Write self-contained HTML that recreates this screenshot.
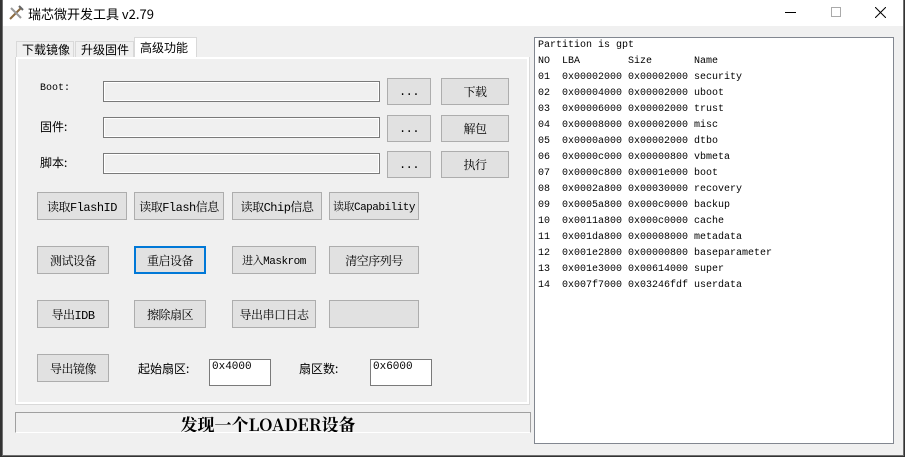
<!DOCTYPE html>
<html><head><meta charset="utf-8"><style>
*{box-sizing:border-box;margin:0;padding:0}
body{width:905px;height:457px;overflow:hidden;background:#333;font-family:"Liberation Sans","Noto Sans CJK SC",sans-serif;font-size:12px;color:#000;position:relative}
.win{position:absolute;left:2px;top:0;width:902px;height:456px;background:#f0f0f0;border:1px solid #707070;border-top:none}
.title{position:absolute;left:0;top:0;width:100%;height:26px;background:#fff}
.a{position:absolute}
.btn{position:absolute;background:#e1e1e1;border:1px solid #adadad;text-align:center;font-family:"Liberation Mono","Noto Serif CJK SC",monospace;font-size:12px;letter-spacing:-0.5px;display:flex;align-items:center;justify-content:center;white-space:nowrap}
.inp{position:absolute;background:#f0f0f0;border:1px solid #7a7a7a;box-shadow:inset 0 0 0 1px #fff}
.lbl{position:absolute;font-size:12px;font-family:"Noto Sans CJK SC",sans-serif}
.list{position:absolute;left:531px;top:37px;width:360px;height:407px;background:#fff;border:1px solid #828790;font-family:"Liberation Mono","Noto Sans CJK SC",monospace;font-size:10px;line-height:16px;padding:0 0 0 3px;white-space:pre}
</style></head><body>
<div class="win">
<div class="title">
 <svg class="a" style="left:5px;top:5px" width="16" height="16"><path d="M2 14L13 3" stroke="#8a6a40" stroke-width="2"/><path d="M3 3l10 10" stroke="#999" stroke-width="2"/><path d="M11 1l4 4" stroke="#666" stroke-width="2"/></svg>
 <div class="a" style="left:25px;top:4px;font-size:13px;font-family:'Noto Sans CJK SC',sans-serif">瑞芯微开发工具 v2.79</div>
 <div class="a" style="left:782px;top:12px;width:11px;height:1px;background:#000"></div>
 <div class="a" style="left:828px;top:7px;width:10px;height:10px;border:1px solid #aaa"></div>
 <svg class="a" style="left:872px;top:7px" width="11" height="11"><path d="M0 0L11 11M11 0L0 11" stroke="#000" stroke-width="1"/></svg>
</div>
<div class="a" style="left:13px;top:41px;width:58px;height:17px;border:1px solid #d9d9d9;border-bottom:none;background:#f0f0f0"></div>
<div class="lbl" style="left:19px;top:41px">下载镜像</div>
<div class="a" style="left:72px;top:41px;width:59px;height:17px;border:1px solid #d9d9d9;border-bottom:none"></div>
<div class="lbl" style="left:78px;top:41px">升级固件</div>
<div class="a" style="left:131px;top:37px;width:63px;height:21px;background:#fff;border:1px solid #d9d9d9;border-bottom:none"></div>
<div class="lbl" style="left:137px;top:39px">高级功能</div>
<div class="a" style="left:12px;top:57px;width:515px;height:348px;border:1px solid #d9d9d9;border-top:none;box-shadow:inset 0 0 0 2px #fff"></div>
<div class="a" style="left:13px;top:57px;width:118px;height:1px;background:#fff"></div>

<div class="lbl" style="left:37px;top:83px;font-family:'Liberation Mono',monospace;font-size:10px">Boot:</div>
<div class="lbl" style="left:37px;top:118px">固件:</div>
<div class="lbl" style="left:37px;top:154px">脚本:</div>
<div class="inp" style="left:100px;top:81px;width:277px;height:21px"></div>
<div class="inp" style="left:100px;top:117px;width:277px;height:21px"></div>
<div class="inp" style="left:100px;top:153px;width:277px;height:21px"></div>
<div class="btn" style="left:384px;top:78px;width:44px;height:27px">...</div>
<div class="btn" style="left:384px;top:115px;width:44px;height:27px">...</div>
<div class="btn" style="left:384px;top:151px;width:44px;height:27px">...</div>
<div class="btn" style="left:438px;top:78px;width:68px;height:27px">下载</div>
<div class="btn" style="left:438px;top:115px;width:68px;height:27px">解包</div>
<div class="btn" style="left:438px;top:151px;width:68px;height:27px">执行</div>

<div class="btn" style="left:34px;top:192px;width:90px;height:28px">读取FlashID</div>
<div class="btn" style="left:131px;top:192px;width:90px;height:28px">读取Flash信息</div>
<div class="btn" style="left:229px;top:192px;width:90px;height:28px">读取Chip信息</div>
<div class="btn" style="left:326px;top:192px;width:90px;height:28px;font-size:11px">读取Capability</div>

<div class="btn" style="left:34px;top:246px;width:72px;height:28px">测试设备</div>
<div class="btn" style="left:131px;top:246px;width:72px;height:28px;border:2px solid #0078d7">重启设备</div>
<div class="btn" style="left:229px;top:246px;width:84px;height:28px;font-size:11px">进入Maskrom</div>
<div class="btn" style="left:326px;top:246px;width:90px;height:28px">清空序列号</div>

<div class="btn" style="left:34px;top:300px;width:72px;height:28px">导出IDB</div>
<div class="btn" style="left:131px;top:300px;width:72px;height:28px">擦除扇区</div>
<div class="btn" style="left:229px;top:300px;width:84px;height:28px">导出串口日志</div>
<div class="btn" style="left:326px;top:300px;width:90px;height:28px"></div>

<div class="btn" style="left:34px;top:354px;width:72px;height:28px">导出镜像</div>
<div class="lbl" style="left:135px;top:360px">起始扇区:</div>
<div class="a" style="left:206px;top:359px;width:62px;height:27px;background:#fff;border:1px solid #7a7a7a;font-family:'Liberation Mono',monospace;font-size:11px;padding:1px 0 0 2px">0x4000</div>
<div class="lbl" style="left:296px;top:360px">扇区数:</div>
<div class="a" style="left:367px;top:359px;width:62px;height:27px;background:#fff;border:1px solid #7a7a7a;font-family:'Liberation Mono',monospace;font-size:11px;padding:1px 0 0 2px">0x6000</div>

<div class="a" style="left:12px;top:412px;width:516px;height:21px;border:1px solid #a0a0a0;border-bottom:1px solid #fff;background:#f0f0f0;text-align:center;font-family:'Noto Serif CJK SC','Liberation Serif',serif;font-weight:bold;font-size:17px;line-height:22px;overflow:hidden;padding-right:10px">发现一个LOADER设备</div>

<div class="list">Partition is gpt
NO  LBA        Size       Name
01  0x00002000 0x00002000 security
02  0x00004000 0x00002000 uboot
03  0x00006000 0x00002000 trust
04  0x00008000 0x00002000 misc
05  0x0000a000 0x00002000 dtbo
06  0x0000c000 0x00000800 vbmeta
07  0x0000c800 0x0001e000 boot
08  0x0002a800 0x00030000 recovery
09  0x0005a800 0x000c0000 backup
10  0x0011a800 0x000c0000 cache
11  0x001da800 0x00008000 metadata
12  0x001e2800 0x00000800 baseparameter
13  0x001e3000 0x00614000 super
14  0x007f7000 0x03246fdf userdata</div>
</div>
</body></html>
